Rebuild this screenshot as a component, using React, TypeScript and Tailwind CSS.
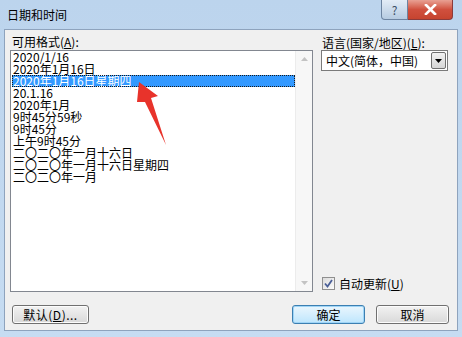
import React from 'react'

const formats = [
  '2020/1/16',
  '2020年1月16日',
  '2020年1月16日星期四',
  '20.1.16',
  '2020年1月',
  '9时45分59秒',
  '9时45分',
  '上午9时45分',
  '二〇二〇年一月十六日',
  '二〇二〇年一月十六日星期四',
  '二〇二〇年一月',
]

const font = { fontFamily: '"Noto Sans CJK SC", "Noto Sans", sans-serif' }

function Btn({ children, primary }: { children: React.ReactNode; primary?: boolean }) {
  return (
    <div
      className={
        'h-[19px] rounded-[3px] border flex items-center justify-center text-[12px] text-black ' +
        (primary
          ? 'border-[#3c7fb1] bg-gradient-to-b from-[#eaf6fd] to-[#bee6fd] shadow-[inset_0_0_0_1px_#9fd5f7]'
          : 'border-[#707070] bg-gradient-to-b from-[#f2f2f2] to-[#d9d9d9] shadow-[inset_0_0_0_1px_#fcfcfc]')
      }
    >
      {children}
    </div>
  )
}

export default function App() {
  return (
    <div
      className="relative w-[462px] h-[337px] overflow-hidden bg-gradient-to-b from-[#bcd4ed] to-[#c6dcf2] text-black"
      style={font}
    >
      {/* title bar */}
      <div className="h-[29px] flex items-start">
        <span className="pl-[7px] pt-[8px] text-[12px] leading-[14px]">日期和时间</span>
        <div className="ml-auto mr-[9px] flex">
          <div className="w-[27px] h-[20px] rounded-bl-[4px] border border-[#6d84a1] border-t-0 bg-gradient-to-b from-[#e3ecf6] to-[#b6cbe1] flex items-center justify-center text-[12px] text-[#3d4f66] leading-none">
            ?
          </div>
          <div className="w-[45px] h-[20px] rounded-br-[4px] border border-[#8b3b3b] border-t-0 border-l-0 bg-gradient-to-b from-[#e8a093] via-[#d0503e] to-[#c6442f] flex items-center justify-center">
            <svg width="13" height="11" viewBox="0 0 13 11">
              <path d="M2 1 L11 10 M11 1 L2 10" stroke="#fff" strokeWidth="2.6" strokeLinecap="square" />
            </svg>
          </div>
        </div>
      </div>

      {/* client */}
      <div className="ml-[4px] w-[454px] h-[302px] border border-[#8ea3bd] bg-[#f0f0f0] flex flex-col">
        <div className="flex h-[262px]">
          {/* left column */}
          <div className="ml-[5px] w-[303px] flex flex-col">
            <div className="h-[20px] pt-[5px] pl-[2px] text-[12px] leading-[14px]">
              可用格式(<span className="underline">A</span>):
            </div>
            <div className="h-[243px] border border-[#828790] bg-white flex">
              <div className="flex-1 pl-[1px] pt-[0px]">
                {formats.map((f, i) => (
                  <div
                    key={f}
                    className={
                      'h-[12px] text-[12px] leading-[12px] pl-[1px] whitespace-nowrap ' +
                      (i === 2 ? 'bg-[#3399ff] text-white outline outline-1 outline-dotted outline-[#1a1a1a] -outline-offset-1' : '')
                    }
                  >
                    {f}
                  </div>
                ))}
              </div>
              <div className="w-[17px] bg-[#f7f7f7] border-l border-[#ececec] flex flex-col items-center justify-between py-[6px]">
                <svg width="7" height="4" viewBox="0 0 7 4">
                  <path d="M0 4 L3.5 0 L7 4 Z" fill="#c3c3c3" />
                </svg>
                <svg width="7" height="4" viewBox="0 0 7 4">
                  <path d="M0 0 L3.5 4 L7 0 Z" fill="#c3c3c3" />
                </svg>
              </div>
            </div>
          </div>

          {/* right column */}
          <div className="ml-[8px] w-[127px] flex flex-col">
            <div className="h-[20px] pt-[6px] pl-[1px] text-[12px] leading-[14px] whitespace-nowrap">
              语言(国家/地区)(<span className="underline">L</span>):
            </div>
            <div className="h-[21px] border border-[#7a7a7a] bg-white flex items-center">
              <span className="pl-[4px] text-[12px] leading-none whitespace-nowrap">中文(简体，中国)</span>
              <div className="ml-auto mr-[1px] w-[15px] h-[17px] border border-[#707070] rounded-[2px] bg-gradient-to-b from-[#f2f2f2] to-[#d6d6d6] flex items-center justify-center">
                <svg width="7" height="4" viewBox="0 0 7 4">
                  <path d="M0 0 L3.5 4 L7 0 Z" fill="#000" />
                </svg>
              </div>
            </div>
            <div className="mt-auto mb-[2px] flex items-center pl-[1px]">
              <div className="w-[13px] h-[13px] border border-[#8f8f8f] bg-gradient-to-br from-[#dcdcdc] to-[#fbfbfb] flex items-center justify-center">
                <svg width="9" height="9" viewBox="0 0 9 9">
                  <path d="M1 4.5 L3.5 7.5 L8 1" stroke="#4a5f97" strokeWidth="1.8" fill="none" />
                </svg>
              </div>
              <span className="ml-[4px] text-[12px] leading-none whitespace-nowrap">
                自动更新(<span className="underline">U</span>)
              </span>
            </div>
          </div>
        </div>

        {/* buttons */}
        <div className="mt-[13px] flex items-center">
          <div className="ml-[7px] w-[77px]">
            <Btn>
              <span className="tracking-[0.5px]">
                默认(<span className="underline">D</span>)...
              </span>
            </Btn>
          </div>
          <div className="ml-auto w-[73px]">
            <Btn primary>确定</Btn>
          </div>
          <div className="ml-[11px] mr-[8px] w-[73px]">
            <Btn>取消</Btn>
          </div>
        </div>
      </div>

      {/* annotation arrow */}
      <svg className="absolute left-0 top-0 pointer-events-none" width="462" height="337">
        <polygon points="139,82 158,96 151,98 166,145 145,102 137,102" fill="#e8332b" />
      </svg>
    </div>
  )
}
